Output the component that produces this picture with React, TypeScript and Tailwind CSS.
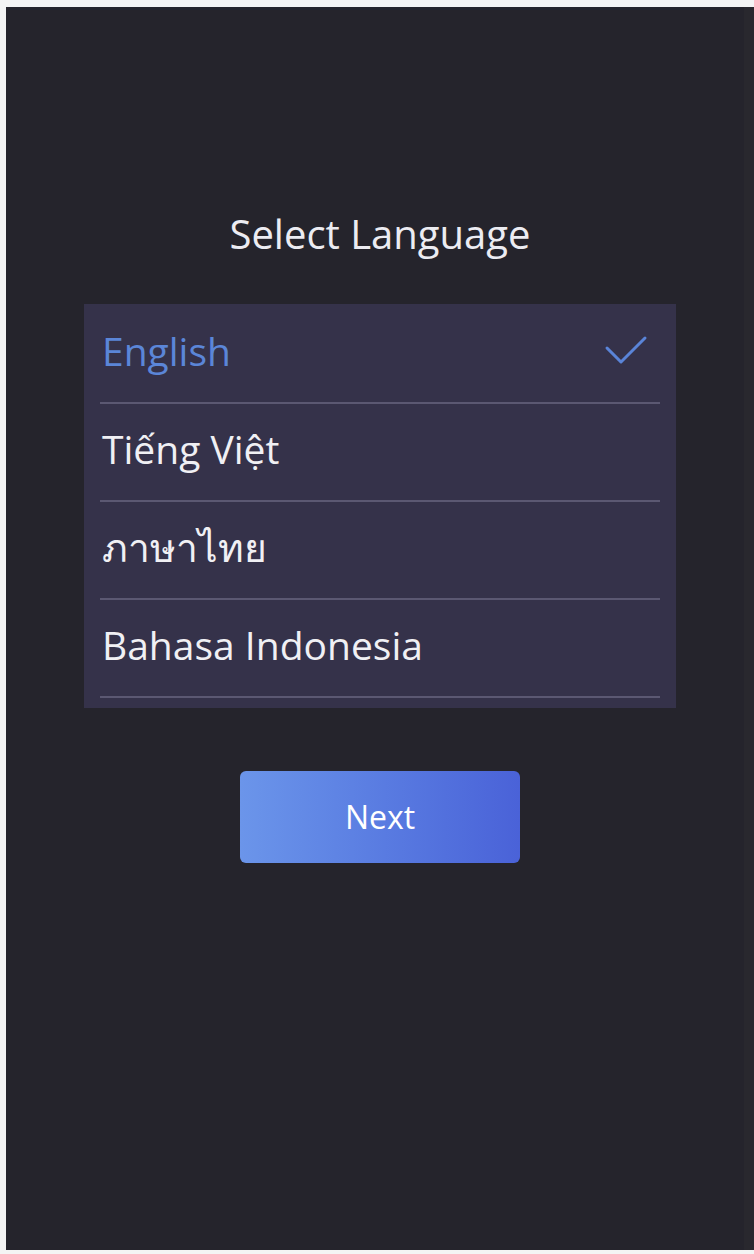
import React, { useState } from 'react';

const languages = ['English', 'Tiếng Việt', 'ภาษาไทย', 'Bahasa Indonesia'];

const CheckMark: React.FC = () => (
  <svg width="44" height="34" viewBox="0 0 44 34" fill="none">
    <path d="M3 14 L17 28 L41 4" stroke="#5a84d8" strokeWidth="3" strokeLinecap="round" strokeLinejoin="round" />
  </svg>
);

const App: React.FC = () => {
  const [selected, setSelected] = useState('English');

  return (
    <div className="w-[754px] h-[1254px] bg-[#f4f4f4] pl-[6px] pt-[7px] pb-[4px] font-['Open_Sans','Noto_Sans','DejaVu_Sans',sans-serif]">
      <div className="h-full bg-[#25242c] border-r-[10px] border-[#29282e] flex flex-col items-center pt-[201px] pl-[10px]">
        <h1 className="text-[40px] leading-[52px] text-[#ececf2] font-normal">Select Language</h1>

        <ul className="mt-[44px] w-[592px] bg-[#35324a] px-4 pt-[2px] pb-[10px]">
          {languages.map((lang) => {
            const active = lang === selected;
            return (
              <li
                key={lang}
                onClick={() => setSelected(lang)}
                className="h-[98px] flex items-center justify-between border-b-2 border-[#5b5872] pl-[2px] pr-[12px] pb-[6px] cursor-pointer"
              >
                <span className={`text-[39px] ${active ? 'text-[#5b86d8]' : 'text-[#f0f0f4]'}`}>{lang}</span>
                {active && <CheckMark />}
              </li>
            );
          })}
        </ul>

        <button className="mt-[63px] w-[280px] h-[92px] rounded-md bg-gradient-to-r from-[#6b95ea] to-[#4a62d8] text-white text-[32px]">
          Next
        </button>
      </div>
    </div>
  );
};

export default App;
